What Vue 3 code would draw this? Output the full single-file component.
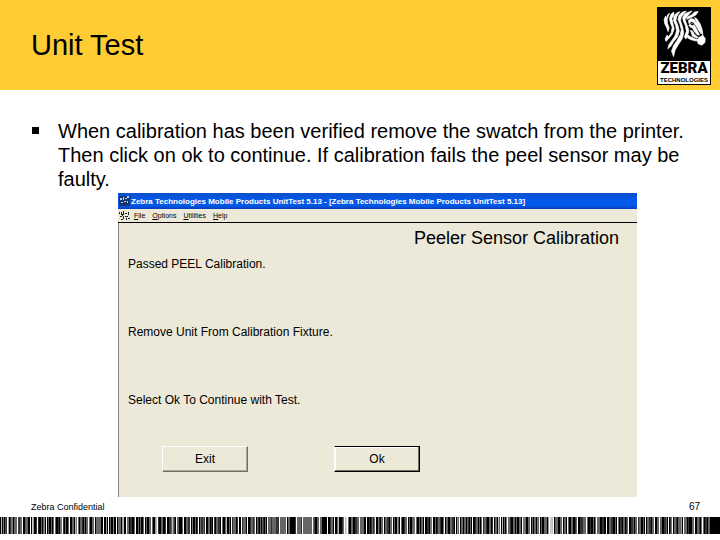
<template>
  <main class="slide">
    <header class="slide-header">
      <h1 class="slide-title">Unit Test</h1>
      <div class="logo">
        <svg class="logo-zebra" viewBox="0 0 160 160" aria-hidden="true">
          <g fill="#fff" stroke="#fff" stroke-width="2" stroke-linejoin="round">
            <path d="M37 18 L31 24 L28 33 L25 27 L21 38 L23 50 L29 62 L33 73 L36 62 L31 48 L30 36 Z" />
            <path d="M49 15 L41 22 L37 34 L40 48 L45 60 L42 76 L34 89 L30 83 L24 94 L27 102 L34 94 L45 81 L51 65 L47 48 L44 34 L51 22 Z" />
            <path d="M68 14 L58 18 L50 28 L49 41 L55 54 L58 70 L53 86 L44 99 L35 112 L32 124 L41 116 L49 103 L61 88 L66 71 L62 54 L56 40 L59 27 Z" />
            <path d="M87 12 L75 15 L65 25 L62 37 L68 51 L72 67 L69 82 L60 98 L49 114 L43 131 L49 147 L54 127 L63 112 L75 94 L79 77 L76 59 L70 41 L72 29 Z" />
            <path d="M104 12 L96 14 L83 20 L76 30 L78 42 L84 55 L87 72 L81 89 L86 95 L93 78 L94 67 L88 51 L83 37 L91 26 Z" />
            <path d="M122 13 L111 15 L103 23 L91 29 L88 37 L95 33 L106 29 L116 23 Z" />
            <path d="M93 39 L101 34 L111 37 L120 50 L128 65 L131 80 L124 70 L116 56 L108 45 L101 43 L95 50 Z" />
            <path d="M94 54 L101 48 L110 52 L118 67 L126 83 L120 83 L111 73 L105 62 L99 60 Z" />
            <path d="M99 69 L104 70 L112 82 L122 90 L117 92 L105 87 Z" />
            <path d="M91 83 L99 88 L114 95 L124 96 L116 101 L101 97 L90 91 Z" />
            <path d="M111 31 L118 35 L128 50 L134 68 L136 84 L131 74 L126 59 L118 45 Z" />
            <path d="M124 90 L136 84 L143 94 L142 105 L133 113 L122 109 L119 99 Z" />
          </g>
          <path d="M96 49 L105 49 L111 54 L104 54 Z" fill="#000" />
        </svg>
        <div class="logo-label">
          <span class="logo-name">ZEBRA</span>
          <span class="logo-sub">TECHNOLOGIES</span>
        </div>
      </div>
    </header>

    <section class="slide-body">
      <ul class="bullets">
        <li class="bullet">
          When calibration has been verified remove the swatch from the printer.
          Then click on ok to continue. If calibration fails the peel sensor may be faulty.
        </li>
      </ul>

      <!-- Application window -->
      <div class="app">
        <div class="app-titlebar">
          <svg class="app-icon" viewBox="0 0 11 10" aria-hidden="true">
            <rect width="11" height="10" fill="#17366f" />
            <path d="M1 2h2v2h-2zM4 1h1v3h-1zM6 2h2v1h-2zM8 0h2v2h-2zM5 5h2v1h-2zM2 6h2v1h-2zM8 5h1v2h-1z" fill="#c5d3e6" />
          </svg>
          <span>{{ appName }} - [{{ appName }}]</span>
        </div>
        <nav class="app-menu">
          <svg class="app-icon" viewBox="0 0 11 10" aria-hidden="true">
            <path d="M0 1h1v2h-1zM2 1h1v3h-1zM4 0h1v4h-1zM6 2h2v1h-2zM9 1h1v3h-1zM1 5h2v1h-2zM4 5h1v3h-1zM6 5h3v1h-3zM2 8h2v1h-2zM7 7h1v2h-1zM9 7h2v1h-2zM3 3h1v2h-1z" fill="#222" />
          </svg>
          <button v-for="item in menu" :key="item" type="button" class="menu-item">
            <u>{{ item[0] }}</u>{{ item.slice(1) }}
          </button>
        </nav>
        <div class="app-content">
          <h2 class="app-heading">Peeler Sensor Calibration</h2>
          <div class="messages">
            <p v-for="message in messages" :key="message" class="message">{{ message }}</p>
          </div>
          <div class="actions">
            <button type="button" class="btn">Exit</button>
            <button type="button" class="btn btn-default">Ok</button>
          </div>
        </div>
      </div>
    </section>

    <footer class="slide-footer">
      <div class="footer-text">
        <span class="footer-note">Zebra Confidential</span>
        <span class="footer-page">67</span>
      </div>
      <svg class="barcode" viewBox="0 0 720 1" preserveAspectRatio="none" shape-rendering="crispEdges" aria-hidden="true">
        <rect v-for="(shade, i) in bars" :key="i" :x="i" y="0" width="1" height="1" :fill="'#' + shade.repeat(3)" />
      </svg>
    </footer>
  </main>
</template>

<script setup>
const appName = 'Zebra Technologies Mobile Products UnitTest 5.13'
const menu = ['File', 'Options', 'Utilities', 'Help']
const messages = [
  'Passed PEEL Calibration.',
  'Remove Unit From Calibration Fixture.',
  'Select Ok To Continue with Test.',
]

// One hex digit per bar, groups are separated by a light bar
const groups = [
  '0b07053 a03770666 4366 0066600 0c9003 20060680 0600606 6003077 306006 00660b7',
  '6066306066 60066 06666600 0090 0600800 066609b00 66033006 00606006 060066 6009b',
  '30066003 00336b630 650006 006633 0700603 063363 0066030 3066330 6006b0060 366603 00',
  '36660 0036636 06306063060 66636666333 666666 066000003 66663 666666666 640066',
  '6600000 003660 006b00036 bd 60066003366 666600 00303636 0073066 06633066 0600960',
  '600366 0600667 60060660 0033077 00603663006 0660066330 096 066066063060 003660606',
  '3663006603 0660b6 0b0607 66300660600660 7760066 06066076 060066609 ccb 06660066 0660',
  '600660036 00333666 600300606 666003300 0066330060 7033066036 00336066 3660060 06633066',
  '0066 66003360 037 0663066690 6660300066 0066306 60330660',
]
const bars = groups.join(' ').replaceAll(' ', 'f').slice(0, 711).padEnd(720, '0').split('')
</script>

<style>
body { margin: 0; background: #fff; }
</style>

<style scoped>
.slide {
  min-height: 100vh;
  display: flex; flex-direction: column;
  font-family: "Liberation Sans", Arial, sans-serif;
  color: #000; background: #fff;
}

/* Header */
.slide-header {
  background: #ffcc33;
  padding: 7px 9px 5px 31px;
  display: flex; align-items: flex-start; justify-content: space-between;
}
.slide-title { margin: 22px 0 0; font-size: 29px; line-height: 32px; font-weight: 400; }
.logo { width: 54px; background: #000; padding-bottom: 1px; }
.logo-zebra { display: block; width: 100%; }
.logo-label {
  background: #fff; margin: 0 1px;
  display: flex; flex-direction: column; align-items: center;
}
.logo-name { font: 900 15px/15px Roboto, "Liberation Sans", Arial, sans-serif; }
.logo-sub { font-size: 6px; line-height: 8px; font-weight: 700; }

/* Body */
.slide-body { flex: 1; padding-top: 29px; }
.bullets { list-style: none; margin: 0; padding: 0 30px 0 58px; }
.bullet { position: relative; font-size: 20px; line-height: 24px; }
.bullet::before {
  content: ""; position: absolute; left: -26px; top: 8px;
  width: 7px; height: 7px; background: #000;
}

/* Application window */
.app { margin: 2px 83px 0 118px; background: #ece9d8; }
.app-titlebar {
  height: 16px; padding-left: 1px; overflow: hidden;
  display: flex; align-items: center; gap: 1px;
  background: linear-gradient(#0a50c8, #0458e8 40%, #0458e8 80%, #0340b8);
  color: #fff; font-size: 8px; font-weight: 700; white-space: nowrap;
}
.app-icon { width: 11px; height: 10px; flex-shrink: 0; }
.app-menu {
  height: 13px; padding-left: 1px;
  display: flex; align-items: center; gap: 4px;
  border-bottom: 1px solid #000;
}
.menu-item {
  border: 0; padding: 0; margin-right: 3px; background: none;
  font: 7px "Liberation Sans", Arial, sans-serif; color: #000;
}
.app-content { border-left: 1px solid #8a887c; padding: 4px 18px 25px 9px; }
.app-heading { margin: 0; font-size: 18px; line-height: 22px; font-weight: 400; text-align: right; }
.messages { padding-top: 8px; display: flex; flex-direction: column; gap: 54px; }
.message { margin: 0; font-size: 12px; line-height: 14px; }
.actions { display: flex; gap: 86px; padding: 39px 0 0 34px; }
.btn {
  width: 86px; height: 26px; padding: 0;
  background: #ece9d8; color: #000;
  border: 1px solid; border-color: #fff #716f64 #716f64 #fff;
  box-shadow: inset -1px -1px 0 #aca899;
  font: 12px "Liberation Sans", Arial, sans-serif;
}
.btn-default { border-color: #000 #000 #000 #fff; box-shadow: inset -1px -1px 0 #716f64, inset 1px 1px 0 #fff; }

/* Footer */
.footer-text {
  padding: 0 20px 3px 31px;
  display: flex; align-items: center; justify-content: space-between;
}
.footer-note { font-size: 9px; line-height: 14px; }
.footer-page { font-size: 10px; line-height: 14px; }
.barcode { display: block; width: 100%; height: 17px; margin-bottom: 6px; }
</style>
